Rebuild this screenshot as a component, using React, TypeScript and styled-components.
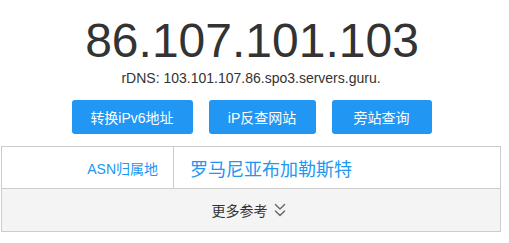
import React from 'react'
import styled, { createGlobalStyle } from 'styled-components'
import { ChevronsDown } from 'lucide-react'

const GlobalStyle = createGlobalStyle`
  html, body {
    margin: 0;
    padding: 0;
    background: #fff;
  }
  body {
    font-family: "Liberation Sans", Arial, "Noto Sans CJK SC", sans-serif;
    color: #333;
  }
`

const App: React.FC = () => {
  return (
    <>
      <GlobalStyle />
      <Wrapper>
        <IpTitle>86.107.101.103</IpTitle>
        <Rdns>rDNS: 103.101.107.86.spo3.servers.guru.</Rdns>
        <ButtonRow>
          <ActionButton w={121}>转换iPv6地址</ActionButton>
          <ActionButton w={107}>iP反查网站</ActionButton>
          <ActionButton w={100}>旁站查询</ActionButton>
        </ButtonRow>
        <InfoTable>
          <InfoRow>
            <Label>ASN归属地</Label>
            <Value>罗马尼亚布加勒斯特</Value>
          </InfoRow>
          <MoreRow>
            更多参考
            <ChevronsDown size={22} strokeWidth={1.5} color="#666" />
          </MoreRow>
        </InfoTable>
      </Wrapper>
    </>
  )
}

export default App

const Wrapper = styled.div`
  width: 500px;
  margin-left: 1px;
  padding-top: 13px;
  display: flex;
  flex-direction: column;
  align-items: center;
`

const IpTitle = styled.div`
  font-size: 48px;
  line-height: 56px;
  color: #333;
  text-align: center;
  margin-left: 2px;
`

const Rdns = styled.div`
  margin-top: 1px;
  font-size: 14px;
  line-height: 16px;
  color: #333;
`

const ButtonRow = styled.div`
  display: flex;
  gap: 16px;
  margin-top: 14px;
  margin-left: 1px;
`

const ActionButton = styled.button<{ w: number }>`
  width: ${(p) => p.w}px;
  height: 34px;
  border: none;
  border-radius: 3px;
  background: #2196f3;
  color: #fff;
  font-family: "Liberation Sans", Arial, "Noto Sans CJK SC", sans-serif;
  font-size: 14px;
  padding: 0;
  cursor: pointer;
`

const InfoTable = styled.div`
  margin-top: 12px;
  width: 100%;
  border: 1px solid #ccc;
  box-sizing: border-box;
`

const InfoRow = styled.div`
  display: grid;
  grid-template-columns: 172px 1fr;
  height: 41px;
  border-bottom: 1px solid #ccc;
`

const Label = styled.div`
  display: flex;
  align-items: center;
  justify-content: flex-end;
  padding-right: 15px;
  border-right: 1px solid #ccc;
  font-size: 14px;
  color: #2196f3;
`

const Value = styled.div`
  display: flex;
  align-items: center;
  padding-left: 16px;
  font-size: 18px;
  color: #2196f3;
`

const MoreRow = styled.div`
  display: flex;
  align-items: center;
  justify-content: center;
  gap: 1px;
  height: 42px;
  background: #f4f4f4;
  font-size: 14px;
  color: #333;
`
